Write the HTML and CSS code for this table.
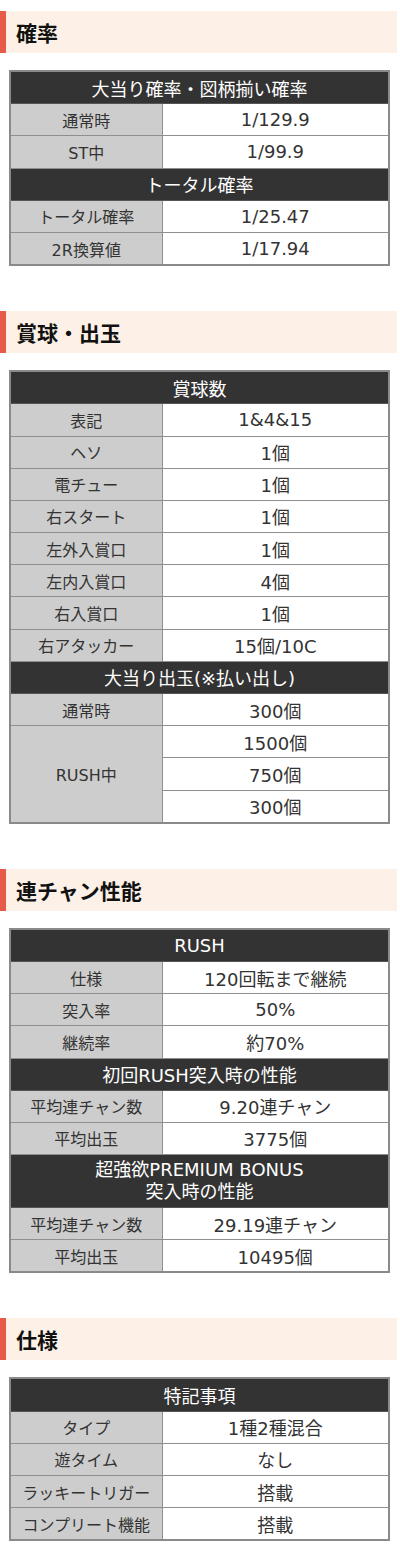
FILE: index.html
```html
<!DOCTYPE html>
<html lang="ja">
<head>
<meta charset="utf-8">
<link rel="stylesheet" href="styles.css">
</head>
<body>
<h2 class="sec sec-first">確率</h2>
<table class="spec">
  <colgroup><col class="c1"><col class="c2"></colgroup>
  <tr><th colspan="2">大当り確率・図柄揃い確率</th></tr>
  <tr><td class="lb">通常時</td><td class="val">1/129.9</td></tr>
  <tr><td class="lb">ST中</td><td class="val">1/99.9</td></tr>
  <tr><th colspan="2">トータル確率</th></tr>
  <tr><td class="lb">トータル確率</td><td class="val">1/25.47</td></tr>
  <tr><td class="lb">2R換算値</td><td class="val">1/17.94</td></tr>
</table>

<h2 class="sec">賞球・出玉</h2>
<table class="spec">
  <colgroup><col class="c1"><col class="c2"></colgroup>
  <tr><th colspan="2">賞球数</th></tr>
  <tr><td class="lb">表記</td><td class="val">1&amp;4&amp;15</td></tr>
  <tr><td class="lb">ヘソ</td><td class="val">1個</td></tr>
  <tr><td class="lb">電チュー</td><td class="val">1個</td></tr>
  <tr><td class="lb">右スタート</td><td class="val">1個</td></tr>
  <tr><td class="lb">左外入賞口</td><td class="val">1個</td></tr>
  <tr><td class="lb">左内入賞口</td><td class="val">4個</td></tr>
  <tr><td class="lb">右入賞口</td><td class="val">1個</td></tr>
  <tr><td class="lb">右アタッカー</td><td class="val">15個/10C</td></tr>
  <tr><th colspan="2">大当り出玉(※払い出し)</th></tr>
  <tr><td class="lb">通常時</td><td class="val">300個</td></tr>
  <tr><td class="lb" rowspan="3">RUSH中</td><td class="val">1500個</td></tr>
  <tr><td class="val">750個</td></tr>
  <tr><td class="val">300個</td></tr>
</table>

<h2 class="sec">連チャン性能</h2>
<table class="spec">
  <colgroup><col class="c1"><col class="c2"></colgroup>
  <tr><th colspan="2">RUSH</th></tr>
  <tr><td class="lb">仕様</td><td class="val">120回転まで継続</td></tr>
  <tr><td class="lb">突入率</td><td class="val">50%</td></tr>
  <tr><td class="lb">継続率</td><td class="val">約70%</td></tr>
  <tr><th colspan="2">初回RUSH突入時の性能</th></tr>
  <tr><td class="lb">平均連チャン数</td><td class="val">9.20連チャン</td></tr>
  <tr><td class="lb">平均出玉</td><td class="val">3775個</td></tr>
  <tr><th colspan="2" class="two">超強欲PREMIUM BONUS<br>突入時の性能</th></tr>
  <tr><td class="lb">平均連チャン数</td><td class="val">29.19連チャン</td></tr>
  <tr><td class="lb">平均出玉</td><td class="val">10495個</td></tr>
</table>

<h2 class="sec">仕様</h2>
<table class="spec">
  <colgroup><col class="c1"><col class="c2"></colgroup>
  <tr><th colspan="2">特記事項</th></tr>
  <tr><td class="lb">タイプ</td><td class="val">1種2種混合</td></tr>
  <tr><td class="lb">遊タイム</td><td class="val">なし</td></tr>
  <tr><td class="lb">ラッキートリガー</td><td class="val">搭載</td></tr>
  <tr><td class="lb">コンプリート機能</td><td class="val">搭載</td></tr>
</table>
</body>
</html>
```

FILE: styles.css
```css
html, body {
  margin: 0;
  padding: 0;
  background: #ffffff;
}
body {
  font-family: "DejaVu Sans", "Noto Sans CJK JP", sans-serif;
  color: #333333;
  padding-bottom: 16px;
}
.sec {
  margin: 45px 3px 0 0;
  height: 42px;
  line-height: 42px;
  padding-left: 10px;
  border-left: 6px solid #e65a4a;
  background: #fdf1e7;
  font-family: "Noto Sans CJK JP", sans-serif;
  font-size: 21px;
  font-weight: bold;
  color: #111111;
}
.sec-first {
  margin-top: 11px;
}
.spec {
  margin: 17px 0 0 9px;
  width: 381px;
  border-collapse: collapse;
  border: 2px solid #8a8a8a;
  table-layout: fixed;
}
.c1 {
  width: 152px;
}
.spec th, .spec td {
  border: 1px solid #8f8f8f;
  padding: 0;
  height: 31.2px;
  text-align: center;
  vertical-align: middle;
}
.spec th {
  background: #333333;
  color: #ffffff;
  font-weight: normal;
  font-size: 18px;
  border-color: #555555;
}
.spec th.two {
  height: 52px;
  line-height: 22px;
}
.lb {
  background: #cdcdcd;
  font-size: 16px;
  color: #333333;
}
.val {
  background: #ffffff;
  font-size: 18px;
  color: #333333;
}
```
